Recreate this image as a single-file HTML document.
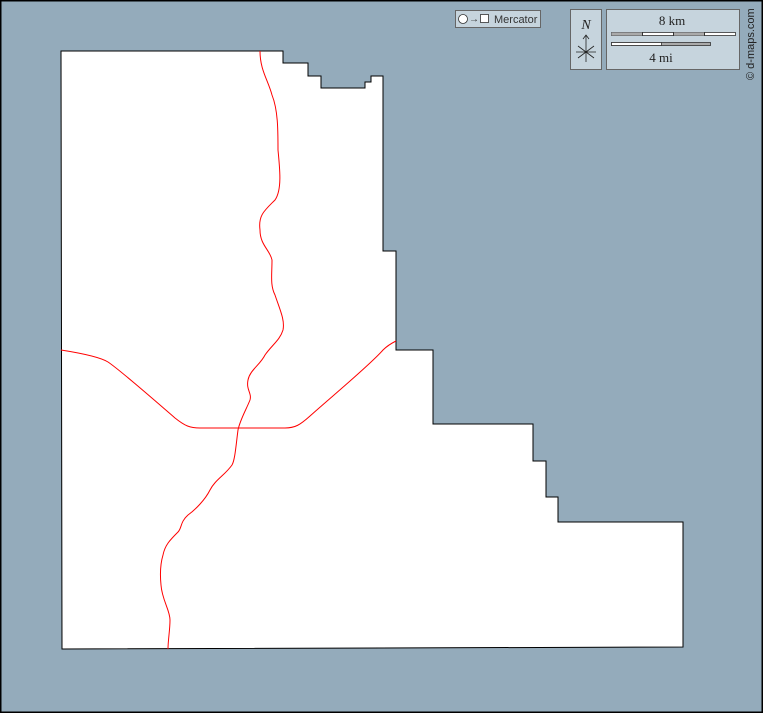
<!DOCTYPE html>
<html><head><style>
html,body{margin:0;padding:0;}
body{width:763px;height:713px;overflow:hidden;background:#94abbb;font-family:"Liberation Sans",sans-serif;}
</style></head><body>
<svg width="763" height="713" xmlns="http://www.w3.org/2000/svg" style="position:absolute;left:0;top:0">
<rect x="0.5" y="0.5" width="762" height="712" fill="#94abbb" stroke="#000" stroke-width="2"/>
<polygon points="61,51 283,51 283,63 308,63 308,76 321,76 321,88 365,88 365,82 371,82 371,76 383,76 383,251 396,251 396,350 433,350 433,424 533,424 533,461 546,461 546,497 558,497 558,522 683,522 683,647 62,649" fill="#fff" stroke="#000" stroke-width="1"/>
<path d="M260,51 C260,70 268,80 272,95 C278,110 278,130 278,150 C280,170 282,190 275,200 C265,210 258,215 260,230 C260,245 270,250 272,260 C272,275 270,285 275,295 C280,310 285,320 283,330 C280,340 272,345 265,355 C260,365 250,370 248,380 C246,390 252,393 250,400 C246,410 240,420 238,430 C236,445 235,460 232,465 C225,475 215,480 210,490 C205,500 195,510 188,515 C180,522 182,528 178,532 C170,540 165,545 163,555 C160,565 160,575 161,585 C162,600 170,610 170,620 C170,630 168,640 168,649" fill="none" stroke="#f00" stroke-width="1"/>
<path d="M61,350 C80,353 100,357 108,362 C120,370 160,405 175,418 C185,426 190,428 200,428 L285,428 C295,428 300,425 310,416 C330,398 370,365 383,350 C388,345 392,343 396,341" fill="none" stroke="#f00" stroke-width="1"/>
<!-- legend -->
<rect x="455.5" y="10.5" width="85" height="17" fill="#c6d4dd" stroke="#666"/>
<circle cx="463" cy="19" r="4.5" fill="#fff" stroke="#333" stroke-width="0.8"/>
<text x="469" y="22" font-size="10" fill="#333">→</text>
<rect x="480.5" y="14.5" width="8" height="8" fill="#fff" stroke="#333" stroke-width="0.8"/>
<text x="494" y="23" font-size="11" fill="#333" font-family="Liberation Sans">Mercator</text>
<rect x="570.5" y="9.5" width="31" height="60" fill="#c6d4dd" stroke="#666"/>
<text x="586" y="29" font-size="14" font-style="italic" text-anchor="middle" font-family="Liberation Serif" fill="#222">N</text>
<path d="M586,35 V62 M583,39 L586,35 L589,39 M578,46 L594,58 M594,46 L578,58 M576,52 H596" stroke="#222" stroke-width="0.8" fill="none"/>
<rect x="606.5" y="9.5" width="133" height="60" fill="#c6d4dd" stroke="#666"/>
<text x="672" y="25" font-size="13" text-anchor="middle" font-family="Liberation Serif" fill="#222">8 km</text>
<rect x="611.5" y="32.5" width="124" height="3" fill="#fff" stroke="#333" stroke-width="0.8"/>
<rect x="611.5" y="32.5" width="31" height="3" fill="#aaa"/>
<rect x="673.5" y="32.5" width="31" height="3" fill="#aaa"/>
<path d="M642.5,32 V36 M673.5,32 V36 M704.5,32 V36" stroke="#333"/>
<rect x="611.5" y="42.5" width="99" height="3" fill="#aaa" stroke="#333" stroke-width="0.8"/>
<rect x="611.5" y="42.5" width="50" height="3" fill="#fff" stroke="#333" stroke-width="0.8"/>
<text x="661" y="62" font-size="13" text-anchor="middle" font-family="Liberation Serif" fill="#222">4 mi</text>
<text transform="translate(754,80) rotate(-90)" font-size="11" fill="#222" font-family="Liberation Sans">© d-maps.com</text>
</svg>
</body></html>
